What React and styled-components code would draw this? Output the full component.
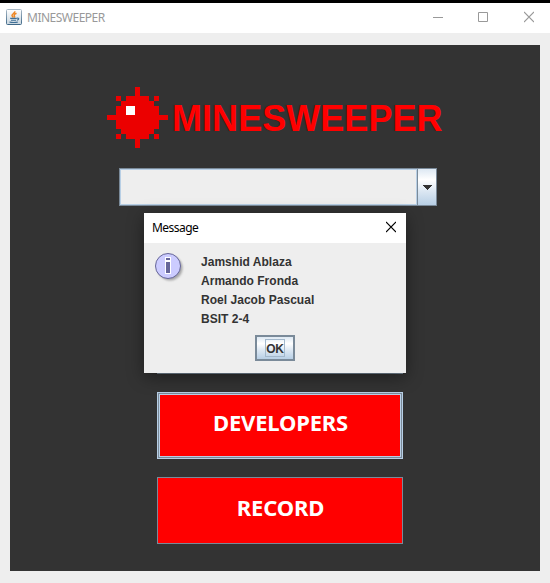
import React from "react";
import styled, { createGlobalStyle } from "styled-components";

const GlobalStyle = createGlobalStyle`
  * { box-sizing: border-box; }
  body { margin: 0; background: #eeeeee; }
  button { margin: 0; padding: 0; }
  svg { display: block; }
`;

const Window = styled.div`
  position: relative;
  width: 550px;
  height: 583px;
  overflow: hidden;
  background: #eeeeee;
  border-top: 3px solid #000;
`;

const TitleBar = styled.header`
  display: flex;
  align-items: center;
  height: 30px;
  padding: 0 0 2px 6px;
  background: #fff;
  color: #999;
  font: 12px "Noto Sans", "Open Sans", sans-serif;
`;

const WindowTitle = styled.span`
  flex: 1;
  margin-left: 5px;
  letter-spacing: -0.5px;
`;

const Controls = styled.div`
  display: grid;
  grid-template-columns: 45px 46px 10px;
  padding-right: 16px;
`;

const Panel = styled.main`
  display: flex;
  flex-direction: column;
  width: 530px;
  height: 526px;
  margin: 12px 10px;
  padding: 42px 0 0 97px;
  background: #333;
`;

const Brand = styled.div`
  display: flex;
  height: 61px;
`;

const BrandName = styled.h1`
  margin: 11px 0 0 4px;
  font: bold 36px/42px "Liberation Sans", Arial, sans-serif;
  letter-spacing: 0.05px;
  color: #f00;
  text-shadow: -1px 0 1px rgba(40, 30, 30, 0.4);
`;

const Combo = styled.div`
  display: flex;
  width: 318px;
  height: 38px;
  margin: 20px 0 0 12px;
  border: 1px solid #7a8a99;
`;

const ComboValue = styled.div`
  flex: 1;
  border: 1px solid #b8cfe5;
  background: #eee;
`;

const ComboArrow = styled.div`
  display: flex;
  align-items: center;
  justify-content: center;
  width: 19px;
  padding-right: 1px;
  border-left: 1px solid #7a8a99;
  background: linear-gradient(#dde8f3 0%, #fff 30%, #dde8f3 60%, #b8cfe5 100%);
`;

const Menu = styled.nav`
  display: flex;
  flex-direction: column;
  gap: 18px;
  margin: 101px 0 0 50px;
`;

const MenuButton = styled.button`
  width: 246px;
  height: 67px;
  padding: 0 0 8px 1px;
  border: 1px solid ${(p) => (p.$focused ? "#b8cfe5" : "#7a8a99")};
  background: #f00;
  box-shadow: ${(p) => (p.$focused ? "inset 0 0 0 1px #7a8a99, inset 0 0 0 2px #b8cfe5" : "none")};
  color: #fff;
  font: bold 22px "Noto Sans", "Open Sans", sans-serif;
  letter-spacing: -0.18px;
`;

const Dialog = styled.section`
  position: absolute;
  left: 144px;
  top: 210px;
  width: 262px;
  height: 160px;
  background: #eee;
  box-shadow: 0 4px 16px rgba(0, 0, 0, 0.42);
`;

const DialogBar = styled.header`
  display: flex;
  align-items: center;
  justify-content: space-between;
  height: 30px;
  padding: 0 10px 2px 8px;
  background: #fff;
  color: #000;
  font: 12px "Noto Sans", "Open Sans", sans-serif;
`;

const DialogTitle = styled.span`
  letter-spacing: -0.55px;
`;

const DialogBody = styled.div`
  display: flex;
  padding: 9px 0 0 10px;
`;

const Names = styled.div`
  margin: 1px 0 0 15px;
  color: #333;
  font: bold 12px/19px "Liberation Sans", Arial, sans-serif;
`;

const NameLine = styled.div`
  height: 19px;
  white-space: nowrap;
  letter-spacing: 0.03px;
`;

const OkButton = styled.button`
  display: flex;
  align-items: center;
  justify-content: center;
  width: 40px;
  height: 26px;
  margin: 6px 0 0 111px;
  border: 2px solid #7a8a99;
  background: linear-gradient(#dde8f3, #fff 30%, #dde8f3 60%, #b8cfe5);
`;

const OkLabel = styled.span`
  display: flex;
  justify-content: center;
  width: 20px;
  height: 18px;
  border: 1px solid #a3b8cc;
  color: #333;
  font: bold 12px/18px "Liberation Sans", Arial, sans-serif;
  letter-spacing: -0.3px;
`;

const JavaIcon = () => (
  <svg width="16" height="16" viewBox="0 0 16 16">
    <defs>
      <linearGradient id="jframe" x1="0" y1="0" x2="0" y2="1">
        <stop offset="0" stopColor="#a9b9c6" />
        <stop offset="1" stopColor="#3f6888" />
      </linearGradient>
      <linearGradient id="jfill" x1="0" y1="0" x2="0" y2="1">
        <stop offset="0" stopColor="#fff" />
        <stop offset="1" stopColor="#c9d6df" />
      </linearGradient>
    </defs>
    <rect x=".5" y=".5" width="15" height="15" rx="1" fill="url(#jfill)" stroke="url(#jframe)" />
    <path d="M8.8 2.3C9.4 4 5.8 4.8 6 6.5c.1.9 1 1.3 1.2 2M10.5 4.3C8.6 5.2 7.6 6 8.4 7c.4.6.3 1-.2 1.6" fill="none" stroke="#ee8622" strokeWidth="1.5" />
    <path d="M4.2 9.4h6.6M11 9.2c2.5-.6 2.2 1.5-.1 2.1M5 11.2h5M3.5 13c2 .7 6.8.6 8.3-.1" fill="none" stroke="#3f6f96" strokeWidth="1.1" />
  </svg>
);

// One entry per run of filled cells: [row, column, run length]
const MINE_RUNS = [
  [0, 6, 1], [1, 6, 1],
  [2, 2, 1], [2, 4, 5], [2, 10, 1],
  [3, 3, 7], [4, 2, 9], [5, 2, 9], [6, 0, 13], [7, 2, 9], [8, 2, 9], [9, 3, 7],
  [10, 2, 1], [10, 4, 5], [10, 10, 1],
  [11, 6, 1], [12, 6, 1],
];

const Mine = () => (
  <svg width="61" height="61" viewBox="0 0 13 13" shapeRendering="crispEdges">
    {MINE_RUNS.map(([y, x, w]) => (
      <rect key={`${x}-${y}`} x={x} y={y} width={w} height="1" fill="#eb0000" />
    ))}
    <rect x="4" y="4" width="2" height="2" fill="#fff" />
  </svg>
);

const InfoIcon = () => (
  <svg width="32" height="32" viewBox="0 0 32 32">
    <defs>
      <filter id="soft" x="-30%" y="-30%" width="160%" height="160%">
        <feGaussianBlur stdDeviation="1.3" />
      </filter>
    </defs>
    <circle cx="16" cy="16" r="12.5" fill="#777" opacity=".6" filter="url(#soft)" />
    <circle cx="14" cy="14" r="12.5" fill="#ccccff" stroke="#666699" />
    <path d="M11 5h6v4h-6zM11 9h6v13h-6z" fill="#fff" />
    <path d="M12 6h4v2h-4zM12 10h4v11h-4z" fill="#666699" />
  </svg>
);

const Cross = ({ color }) => (
  <svg width="10" height="12" viewBox="0 0 10 12">
    <path d="M0 1L10 11M10 1L0 11" stroke={color} strokeWidth="1.15" />
  </svg>
);

const NAMES = ["Jamshid Ablaza", "Armando Fronda", "Roel Jacob Pascual", "BSIT 2-4"];

export default function App() {
  return (
    <Window>
      <GlobalStyle />
      <TitleBar>
        <JavaIcon />
        <WindowTitle>MINESWEEPER</WindowTitle>
        <Controls>
          <svg width="10" height="12"><path d="M0 6.5H10" stroke="#999" /></svg>
          <svg width="10" height="12"><path d="M.5 1.5h9v9h-9z" fill="none" stroke="#999" /></svg>
          <Cross color="#999" />
        </Controls>
      </TitleBar>
      <Panel>
        <Brand>
          <Mine />
          <BrandName>MINESWEEPER</BrandName>
        </Brand>
        <Combo>
          <ComboValue />
          <ComboArrow>
            <svg width="10" height="5" shapeRendering="crispEdges"><path d="M0 0H10L5 5z" fill="#333" /></svg>
          </ComboArrow>
        </Combo>
        <Menu>
          <MenuButton />
          <MenuButton $focused>DEVELOPERS</MenuButton>
          <MenuButton>RECORD</MenuButton>
        </Menu>
      </Panel>
      <Dialog>
        <DialogBar>
          <DialogTitle>Message</DialogTitle>
          <Cross color="#000" />
        </DialogBar>
        <DialogBody>
          <InfoIcon />
          <Names>
            {NAMES.map((name) => (
              <NameLine key={name}>{name}</NameLine>
            ))}
          </Names>
        </DialogBody>
        <OkButton><OkLabel>OK</OkLabel></OkButton>
      </Dialog>
    </Window>
  );
}
